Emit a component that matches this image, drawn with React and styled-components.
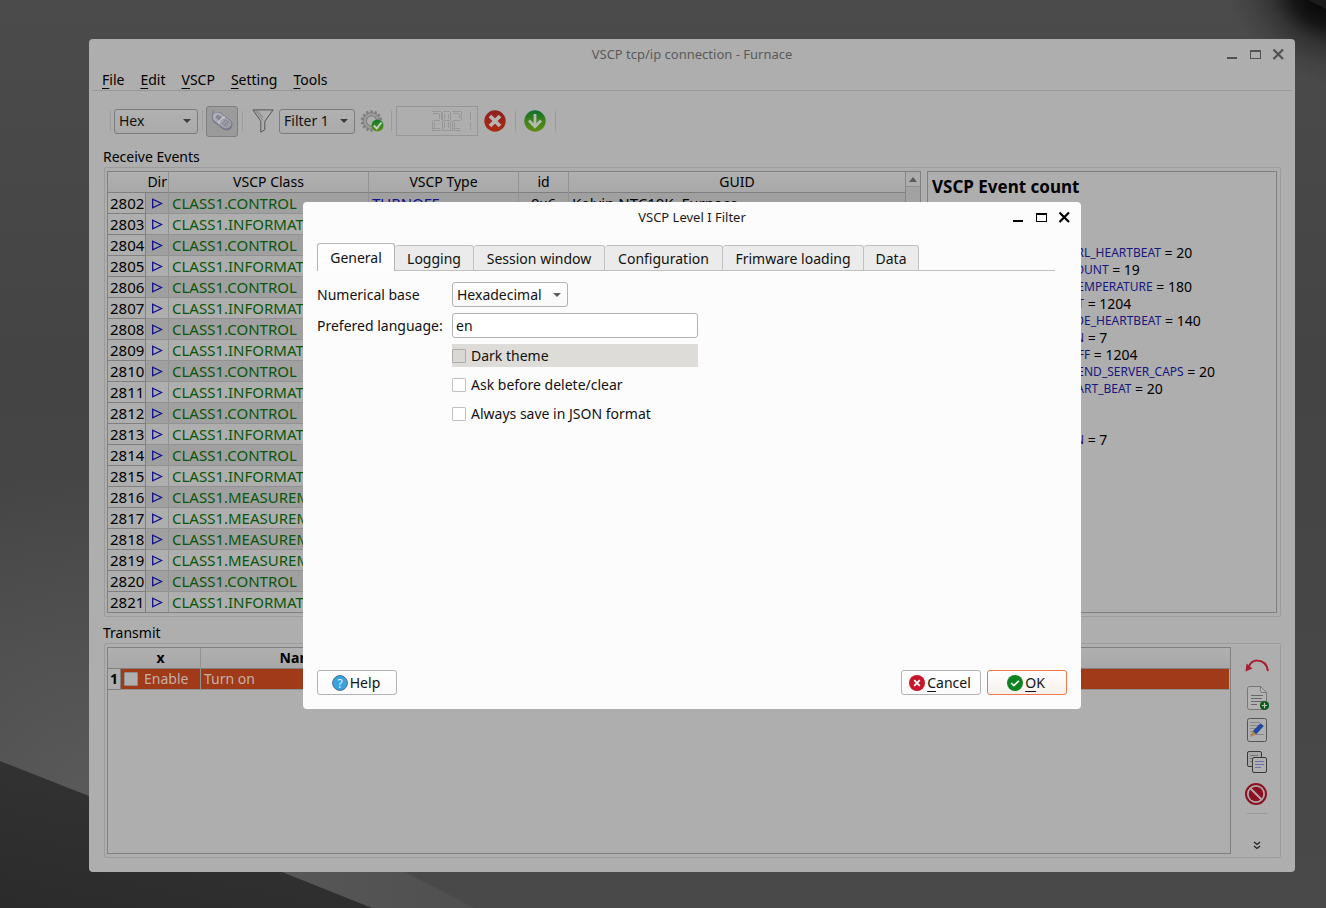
import React from 'react';
import styled, { createGlobalStyle, css } from 'styled-components';

const GlobalStyle = createGlobalStyle`
  * { box-sizing: border-box; }
  body { margin: 0; background: #484848; }
  body, button, input, select, table {
    font-family: "Noto Sans", "Open Sans", sans-serif;
    font-size: 14px;
    line-height: 20px;
  }
`;

/* ---------- Desktop ---------- */

const Desktop = styled.div`
  position: relative;
  display: flex;
  min-height: 100vh;
  padding: 39px 31px 36px 89px;
  overflow: hidden;
`;

const WallpaperSvg = styled.svg`
  position: absolute;
  inset: 0;
  width: 100%;
  height: 100%;
`;

function Wallpaper() {
  return (
    <WallpaperSvg viewBox="0 0 1326 908" preserveAspectRatio="xMidYMid slice" aria-hidden="true">
      <defs>
        <linearGradient id="sky" x1="0" y1="0" x2="0" y2="1">
          <stop offset="0" stopColor="#4b4b4b" />
          <stop offset="0.4" stopColor="#444444" />
          <stop offset="1" stopColor="#494949" />
        </linearGradient>
        <radialGradient id="glow" cx="90" cy="800" r="330" gradientUnits="userSpaceOnUse">
          <stop offset="0" stopColor="#5a5a5a" />
          <stop offset="1" stopColor="#5a5a5a" stopOpacity="0" />
        </radialGradient>
        <linearGradient id="hill" x1="0" y1="1" x2="0.6" y2="0">
          <stop offset="0" stopColor="#2b2b2b" />
          <stop offset="1" stopColor="#343434" />
        </linearGradient>
        <linearGradient id="strip" x1="0" y1="0" x2="1" y2="0">
          <stop offset="0" stopColor="#575757" />
          <stop offset="1" stopColor="#4f4f4f" />
        </linearGradient>
        <radialGradient id="corner" cx="1318" cy="4" r="80" gradientUnits="userSpaceOnUse" gradientTransform="translate(1318 4) rotate(35) scale(1.3 0.9) translate(-1318 -4)">
          <stop offset="0" stopColor="#080808" />
          <stop offset="0.25" stopColor="#080808" stopOpacity="0.8" />
          <stop offset="0.5" stopColor="#080808" stopOpacity="0.35" />
          <stop offset="0.75" stopColor="#080808" stopOpacity="0.12" />
          <stop offset="1" stopColor="#080808" stopOpacity="0" />
        </radialGradient>
      </defs>
      <rect width="1326" height="908" fill="url(#sky)" />
      <rect width="460" height="908" fill="url(#glow)" />
      <path d="M282 872 L405 872 L474 908 L372 908 Z" fill="url(#strip)" />
      <path d="M0 761 L89 796 L282 872 L372 908 L0 908 Z" fill="url(#hill)" />
      <rect x="1180" width="146" height="200" fill="url(#corner)" />
      <path d="M1308 0 L1326 9 L1326 0 Z" fill="#1c1c1c" />
    </WallpaperSvg>
  );
}

/* ---------- Windows ---------- */

const MainWindow = styled.main`
  position: relative;
  display: flex;
  flex-direction: column;
  flex: 1;
  min-width: 0;
  background: #aeaeae;
  border-radius: 4px;
  color: #000;
`;

const TitleBar = styled.header`
  display: grid;
  grid-template-columns: 1fr auto 1fr;
  align-items: center;
  height: 30px;
  padding: 0 9px;
  color: ${(p) => (p.$inactive ? '#5a5a5a' : '#1a1a1a')};
`;

const WindowTitle = styled.h1`
  grid-column: 2;
  margin: 0;
  font-size: 13px;
  font-weight: 400;
  line-height: 20px;
`;

const WindowControls = styled.div`
  display: flex;
  justify-content: flex-end;
  gap: 9px;
`;

const ControlButton = styled.button`
  display: flex;
  padding: 0;
  border: 0;
  background: none;
  color: ${(p) => (p.$inactive ? '#525252' : '#000')};
`;

function Controls({ inactive }) {
  return (
    <WindowControls>
      <ControlButton $inactive={inactive} aria-label="Minimize">
        <svg width="14" height="14"><rect x="1" y="10" width="10" height="2" fill="currentColor" /></svg>
      </ControlButton>
      <ControlButton $inactive={inactive} aria-label="Maximize">
        <svg width="14" height="14"><path d="M1 3h11v9H1z M2 5v6h9V5z" fill="currentColor" fillRule="evenodd" /></svg>
      </ControlButton>
      <ControlButton $inactive={inactive} aria-label="Close">
        <svg width="14" height="14"><path d="M1.500 2.500l9.500 9.500M11 2.500l-9.500 9.500" stroke="currentColor" strokeWidth="2.200" /></svg>
      </ControlButton>
    </WindowControls>
  );
}

const MenuBar = styled.nav`
  display: flex;
  gap: 16px;
  height: 22px;
  margin: 0 3px;
  padding: 1px 10px 0;
  border-bottom: 1px solid #989898;
`;

const MenuLink = styled.a`
  color: inherit;
  text-decoration: none;
`;

const Mnemonic = styled.span`
  text-decoration: underline;
  text-underline-offset: 3px;
`;

/* ---------- Shared controls ---------- */

const SelectBox = styled.span`
  display: inline-grid;
  align-items: center;
  width: ${(p) => p.$width}px;
`;

const SelectField = styled.select`
  grid-area: 1 / 1;
  width: 100%;
  height: 25px;
  padding: 0 4px;
  appearance: none;
  border: 1px solid ${(p) => (p.$dim ? '#7c7c7c' : '#b2b2b2')};
  border-radius: 3px;
  background: ${(p) => (p.$dim ? 'linear-gradient(#b1b1b1, #aaaaaa)' : 'linear-gradient(#fff, #f8f8f8)')};
  color: #111;
`;

const SelectArrow = styled.svg`
  grid-area: 1 / 1;
  justify-self: end;
  margin-right: 7px;
  pointer-events: none;
`;

function Select({ width, dim, options, ...rest }) {
  return (
    <SelectBox $width={width}>
      <SelectField $dim={dim} {...rest}>
        {options.map((o) => <option key={o}>{o}</option>)}
      </SelectField>
      <SelectArrow width="8" height="4"><path d="M0 0h8L4 4z" fill={dim ? '#3c3c3c' : '#5c5c5c'} /></SelectArrow>
    </SelectBox>
  );
}

/* ---------- Toolbar ---------- */

const ToolBar = styled.div`
  display: flex;
  align-items: center;
  height: 56px;
  padding: 4px 21px 0;
`;

const Group = styled.div`
  display: flex;
  align-items: center;
  gap: ${(p) => p.$gap}px;
  height: 20px;
  padding: 0 ${(p) => p.$end}px 0 ${(p) => p.$start}px;
  border-left: 1px solid #9c9c9c;
`;

const IconButton = styled.button`
  display: flex;
  align-items: center;
  justify-content: center;
  padding: 0;
  border: 0;
  background: none;
`;

const PressedButton = styled(IconButton)`
  width: 32px;
  height: 31px;
  border: 1px solid #7e7e7e;
  border-radius: 3px;
  background: #9b9b9b;
`;

function PhoneIcon() {
  return (
    <svg width="24" height="24" viewBox="0 0 24 24">
      <defs>
        <linearGradient id="phone" x1="0" y1="0" x2="1" y2="1">
          <stop offset="0" stopColor="#b4b4bb" />
          <stop offset="1" stopColor="#9a9aa8" />
        </linearGradient>
      </defs>
      <path d="M3 1v5" stroke="#85858f" strokeWidth="1.400" />
      <path d="M2 8.500 Q1 6 3.500 4.500 Q6 2.500 9.500 3 L21 11.500 Q23 13.500 22.500 17 Q20.500 21.500 16.500 21.500 Q14.500 21.500 12.500 20 L3.500 13 Q1.800 11.500 2 8.500z" fill="#77778b" />
      <path d="M2.800 7.500 Q2.500 5.500 4.500 4.500 Q6.500 3.200 9.500 3.800 L20.500 12 Q22 14 21 16.500 Q19 19.500 15.500 19.500 Q14 19.300 12.500 18.200 L4 11.600 Q2.800 10 2.800 7.500z" fill="url(#phone)" />
      <path d="M8.500 14.600 Q9.500 9 15 8" stroke="#cfcfd4" strokeWidth="1.200" fill="none" />
      <path d="M7.500 5.500l4.300 2.800l-2.500 3.200l-4-3z" fill="#85858f" />
      <path d="M15 10.500l4.500 3.300M13.500 12.400l4.500 3.300M12 14.300l4.300 3M15.500 10.500l-3.500 4.500M18 12.500l-3.300 4.500" stroke="#7a7a86" strokeWidth="0.800" />
    </svg>
  );
}

function FunnelIcon() {
  return (
    <svg width="22" height="24" viewBox="0 0 22 24" fill="none" stroke="#555">
      <path d="M0.700 0.900h20.600M1 1l7.800 11.300v10.900l4-2.600v-8.300L21 1" strokeWidth="1" />
      <path d="M3 1l8 10.500M5 1l6 7.500" strokeWidth="0.700" stroke="#6c6c6c" />
    </svg>
  );
}

function GearCheckIcon() {
  const teeth = Array.from({ length: 14 }, (_, i) => (i * 360) / 14);
  return (
    <svg width="24" height="23" viewBox="0 0 24 23">
      <defs>
        <linearGradient id="tick" x1="0" y1="0" x2="0" y2="1">
          <stop offset="0" stopColor="#0d7a2a" />
          <stop offset="1" stopColor="#5c9213" />
        </linearGradient>
      </defs>
      <g fill="#808080">
        {teeth.map((a) => <path key={a} d="M10 3.500L10.400 0.200h2.200l0.400 3.300z" transform={`rotate(${a} 11.500 11)`} />)}
      </g>
      <circle cx="11.500" cy="11" r="6.500" fill="none" stroke="#808080" strokeWidth="4" />
      <circle cx="11.500" cy="11" r="6.700" fill="none" stroke="#9c9c9c" strokeWidth="2" />
      <circle cx="17.500" cy="15.500" r="6" fill="url(#tick)" />
      <path d="M13.800 15.500l3 3l4.600-6" stroke="#c6cfc6" strokeWidth="2" fill="none" />
    </svg>
  );
}

function RedCrossIcon() {
  return (
    <svg width="22" height="22" viewBox="0 0 22 22">
      <defs>
        <linearGradient id="cross" x1="0" y1="0" x2="0" y2="1">
          <stop offset="0" stopColor="#8e2020" />
          <stop offset="1" stopColor="#ad2a12" />
        </linearGradient>
      </defs>
      <circle cx="11" cy="11" r="10.700" fill="url(#cross)" />
      <path d="M6 6l10 10M16 6L6 16" stroke="#b9b4b3" strokeWidth="3.800" />
    </svg>
  );
}

function GreenArrowIcon() {
  return (
    <svg width="22" height="22" viewBox="0 0 22 22">
      <defs>
        <linearGradient id="down" x1="0" y1="0" x2="0" y2="1">
          <stop offset="0" stopColor="#0b6e2f" />
          <stop offset="0.500" stopColor="#3f8218" />
          <stop offset="1" stopColor="#5d8e12" />
        </linearGradient>
      </defs>
      <circle cx="11" cy="11" r="10.700" fill="url(#down)" />
      <path d="M11 4v13M5 10.500l6 6.200l6-6.200" stroke="#b4bab2" strokeWidth="2.800" fill="none" />
    </svg>
  );
}

const Lcd = styled.svg`
  display: block;
`;

function LcdCounter() {
  return (
    <Lcd width="82" height="31" role="img" aria-label="2821">
      <path d="M0.500 30V0.500H82" fill="none" stroke="#979797" />
      <path d="M0 29.500h82M81.500 0v30" stroke="#979797" />
      <g fill="none" stroke="#989898">
        <path d="M36 5.500h9M37 7.500h6M45.500 6v8M43.500 8v5M37 14.500h7M36.500 15v9M38.500 16v6M36 24.500h9M37 22.500h7" />
        <path d="M47 5.500h7M46.500 6v8M48.500 8v5M54.500 6v8M52.500 8v5M47 14.500h7M46.500 15v9M48.500 16v6M54.500 15v9M52.500 16v6M46 24.500h9" />
        <path d="M56 5.500h9M57 7.500h6M65.500 6v8M63.500 8v5M57 14.500h7M56.500 15v9M58.500 16v6M56 24.500h9M57 22.500h7" />
        <path d="M74.500 6v8M74.500 16v8" />
      </g>
    </Lcd>
  );
}

/* ---------- Panels ---------- */

const Section = styled.section`
  display: flex;
  flex-direction: column;
  flex: ${(p) => (p.$grow ? 1 : 'none')};
  margin: 0 14px ${(p) => (p.$grow ? 14 : 6)}px;
`;

const SectionTitle = styled.h2`
  margin: 0;
  font-size: 14px;
  font-weight: 400;
  line-height: 20px;
`;

const GroupBox = styled.div`
  display: flex;
  flex: 1;
  gap: 6px;
  margin-left: 1px;
  padding: 3px 3px 3px 2px;
  border: 1px solid #9c9c9c;
  border-radius: 2px;
`;

const Frame = styled.div`
  display: flex;
  flex: 1;
  align-items: flex-start;
  min-width: 0;
  border: 1px solid #808080;
  overflow: hidden;
`;

const cell = css`
  height: 21px;
  padding: 0 3px;
  border-bottom: 1px solid #929292;
  border-right: 1px solid #929292;
  line-height: 20px;
  white-space: nowrap;
  overflow: hidden;
`;

const DataTable = styled.table`
  flex: 1;
  width: 100%;
  table-layout: fixed;
  border-collapse: separate;
  border-spacing: 0;
`;

const Col = styled.col`
  width: ${(p) => p.$width}px;
`;

const HeadCell = styled.th`
  ${cell}
  padding: 0 1px;
  font-weight: ${(p) => (p.$bold ? 700 : 400)};
  text-align: ${(p) => p.$align || 'center'};
  border-bottom-color: #808080;
  background: linear-gradient(#b0b0b0, #a8a8a8);
  &:last-child { border-right: 0; }
`;

const CornerCell = styled(HeadCell)`
  border-right: 0;
`;

const RowHead = styled.th`
  ${cell}
  padding: 0 1px 0 2px;
  font-size: ${(p) => (p.$bold ? 14 : 15)}px;
  font-weight: ${(p) => (p.$bold ? 700 : 400)};
  text-align: left;
  border-color: #808080;
`;

const Cell = styled.td`
  ${cell}
  color: ${(p) => p.$color || '#000'};
  font-size: 15px;
  text-align: ${(p) => p.$align || 'left'};
  &:last-child { border-right: 0; }
`;

const DirectionMark = styled.svg`
  display: block;
  margin: 0 auto;
`;

const EventRow = styled.tr`
  &:nth-child(odd) td { background: #a0a0a0; }
  &:last-child > * { height: 20px; border-bottom: 0; }
`;

const ScrollBar = styled.div`
  align-self: stretch;
  width: 15px;
  border-left: 1px solid #868686;
  background: #a2a2a2;
`;

const ScrollUp = styled.button`
  display: flex;
  align-items: center;
  justify-content: center;
  width: 14px;
  height: 15px;
  padding: 0;
  border: 1px solid #909090;
  border-width: 0 0 1px;
  background: #acacac;
`;

const CountPanel = styled.aside`
  flex: none;
  width: 350px;
  padding: 4px;
  border: 1px solid #808080;
`;

const CountTitle = styled.h2`
  margin: 0 0 46px;
  font-size: 17px;
  font-weight: 700;
  line-height: 22px;
`;

const CountList = styled.ul`
  margin: 0;
  padding: 0;
  list-style: none;
`;

const CountLine = styled.li`
  display: flex;
  height: 17px;
  line-height: 17px;
  white-space: pre;
`;

const CountName = styled.span`
  color: #17177c;
  font-size: 12px;
`;

const NamePrefix = styled(CountName)`
  width: 152px;
  text-align: right;
`;

const SelectedCell = styled(Cell)`
  background: #a03a18;
  color: #c3b1a9;
  font-size: 14px;
  &:last-child { border-right: 1px solid #aeaeae; }
`;

const EnableLabel = styled.label`
  display: flex;
  align-items: center;
  gap: 6px;
`;

const CheckBox = styled.input`
  appearance: none;
  flex: none;
  width: 14px;
  height: 14px;
  margin: 0;
  border: 1px solid ${(p) => (p.$dim ? '#8e8e8e' : p.$hot ? '#adaca8' : '#c0c0c0')};
  border-radius: 1px;
  background: ${(p) => (p.$dim ? '#b0b0b0' : p.$hot ? '#d9d8d4' : '#fff')};
`;

const SideBar = styled.div`
  display: flex;
  flex: none;
  flex-direction: column;
  align-items: center;
  width: 40px;
  padding: 3px 0 0;
`;

const SideButton = styled(IconButton)`
  width: 32px;
  height: ${(p) => p.$height || 32}px;
`;

const SideRule = styled.hr`
  width: 20px;
  margin: 3px 0 24px;
  border: 0;
  border-top: 1px solid #989898;
`;

function UndoIcon() {
  return (
    <svg width="24" height="24" viewBox="0 0 24 24">
      <path d="M4 12 Q7 6 12.500 6.500 Q21.500 7 23 17" stroke="#a81e30" strokeWidth="2" fill="none" />
      <path d="M0.500 17.500L1.500 9.500L7.500 14.500z" fill="#a81e30" />
    </svg>
  );
}

function AddPageIcon() {
  return (
    <svg width="24" height="26" viewBox="0 0 24 26">
      <path d="M4.500 1.500h11l6 6v15q0 2-2 2h-15q-2 0-2-2v-19q0-2 2-2z" fill="#b3b3b3" stroke="#777" />
      <path d="M15.500 1.500v4q0 2 2 2h4z" fill="#b9b9b9" stroke="#777" />
      <path d="M6 10.500h12M6 13.500h11M6 16.500h12M6 19.500h6" stroke="#666" />
      <circle cx="19.500" cy="20.500" r="4.600" fill="#0c5a17" />
      <path d="M19.500 17.800v5.400M16.800 20.500h5.400" stroke="#c0cac1" strokeWidth="1.200" />
    </svg>
  );
}

function EditPageIcon() {
  return (
    <svg width="22" height="26" viewBox="0 0 22 26">
      <rect x="1.500" y="1.500" width="19" height="23" rx="2" fill="#b0b0b0" stroke="#555" />
      <path d="M4 5.500h10M4 8.500h10M4 11.500h6M4 14.500h5M4 17.500h14" stroke="#888" />
      <path d="M6.800 14L14.500 6.200L17.800 9L10 17.500z" fill="#22479f" />
      <path d="M6.800 14L10 17.500L4 20z" fill="#b08350" />
    </svg>
  );
}

function CopyIcon() {
  return (
    <svg width="22" height="24" viewBox="0 0 22 24">
      <rect x="1.500" y="1.500" width="14" height="15" rx="1.500" fill="#a8a8a8" stroke="#3a3a3a" />
      <path d="M4 5.500h8M4 8.500h4M4 11.500h4" stroke="#777" />
      <rect x="6.500" y="7.500" width="14" height="15" rx="1.500" fill="#b0b0b0" stroke="#3a3a3a" />
      <path d="M9 11.500h9M9 14.500h9M9 17.500h6" stroke="#6f6fa6" />
    </svg>
  );
}

function ForbidIcon() {
  return (
    <svg width="24" height="24" viewBox="0 0 24 24">
      <circle cx="11" cy="12" r="10" fill="none" stroke="#8d1022" strokeWidth="2" />
      <circle cx="11" cy="12" r="7.300" fill="#8d1022" />
      <path d="M5.500 6.500l11 11" stroke="#b5aaab" strokeWidth="2" />
    </svg>
  );
}

/* ---------- Dialog ---------- */

const DialogLayer = styled.div`
  position: absolute;
  inset: 0;
  display: flex;
  align-items: center;
  justify-content: center;
`;

const Dialog = styled.section`
  display: flex;
  flex-direction: column;
  width: 778px;
  max-width: 100%;
  min-height: 507px;
  background: #fcfcfc;
  border-radius: 4px;
  color: #111;
`;

const TabList = styled.div`
  display: flex;
  align-items: flex-end;
  height: 28px;
  margin: 11px 26px 0 14px;
  background: linear-gradient(#c1c1c1, #c1c1c1) bottom / 100% 1px no-repeat;
`;

const Tab = styled.button`
  width: ${(p) => p.$width}px;
  height: 26px;
  padding: 1px 0 0;
  border: 1px solid #c1c1c1;
  border-left-width: 0;
  border-radius: 3px 3px 0 0;
  background: #ebebeb;
  color: #111;
  white-space: nowrap;
  ${(p) => p.$active && css`
    height: 28px;
    border-left-width: 1px;
    border-bottom: 0;
    border-color: #b4b4b4;
    background: #fdfdfd;
  `}
`;

const Form = styled.form`
  display: grid;
  grid-template-columns: 135px 246px;
  row-gap: 6px;
  align-items: center;
  flex: 1;
  align-content: start;
  padding: 11px 14px 0;
`;

const TextInput = styled.input`
  width: 100%;
  height: 25px;
  padding: 0 3px;
  border: 1px solid #b2b2b2;
  border-radius: 3px;
  background: #fff;
  color: #111;
`;

const CheckRow = styled.label`
  grid-column: 2;
  display: flex;
  align-items: center;
  gap: 5px;
  height: 23px;
  background: ${(p) => (p.$hot ? '#dddcd8' : 'transparent')};
`;

const DialogButtons = styled.footer`
  display: flex;
  gap: 6px;
  padding: 0 14px 14px;
`;

const PushButton = styled.button`
  display: flex;
  align-items: center;
  justify-content: center;
  gap: 2px;
  width: 80px;
  height: 25px;
  padding: 0 2px 0 0;
  border: 1px solid ${(p) => (p.$primary ? '#f07746' : '#b2b2b2')};
  border-radius: 3px;
  background: ${(p) => (p.$primary ? 'linear-gradient(#fff, #f7f0ed)' : 'linear-gradient(#fff, #fafafa)')};
  color: #111;
  &:first-child { margin-right: auto; }
`;

const QuestionMark = styled.text`
  font-size: 12px;
  text-anchor: middle;
  fill: #e8f6ff;
`;

function HelpIcon() {
  return (
    <svg width="16" height="16" viewBox="0 0 16 16">
      <circle cx="8" cy="8" r="7.400" fill="#36a3e4" stroke="#4d6f86" strokeWidth="1" />
      <QuestionMark x="8" y="12.500">?</QuestionMark>
    </svg>
  );
}

function CancelIcon() {
  return (
    <svg width="16" height="16" viewBox="0 0 16 16">
      <circle cx="8" cy="8" r="8" fill="#c7162b" />
      <path d="M5.200 5.200l5.600 5.600M10.800 5.200l-5.600 5.600" stroke="#fff" strokeWidth="1.800" />
    </svg>
  );
}

function OkIcon() {
  return (
    <svg width="16" height="16" viewBox="0 0 16 16">
      <circle cx="8" cy="8" r="8" fill="#0e8420" />
      <path d="M4.200 8l2.600 2.600l5-4.800" stroke="#fff" strokeWidth="1.700" fill="none" />
    </svg>
  );
}

/* ---------- Data ---------- */

const menus = ['File', 'Edit', 'VSCP', 'Setting', 'Tools'];

const tabs = [
  ['General', 78], ['Logging', 79], ['Session window', 131],
  ['Configuration', 118], ['Frimware loading', 141], ['Data', 55],
];

const CONTROL = 'CLASS1.CONTROL';
const INFO = 'CLASS1.INFORMATION';
const MEASURE = 'CLASS1.MEASUREMENT';

const events = [
  CONTROL, INFO, CONTROL, INFO, CONTROL, INFO, CONTROL, INFO, CONTROL, INFO,
  CONTROL, INFO, CONTROL, INFO, MEASURE, MEASURE, MEASURE, MEASURE, CONTROL, INFO,
].map((name, i) => ({ id: 2802 + i, name }));
Object.assign(events[0], { type: 'TURNOFF', node: '0x6', guid: 'Kelvin NTC10K, Furnace' });

const counts = [
  ['R', 'L_HEARTBEAT', 20], ['O', 'UNT', 19], ['E', 'MPERATURE', 180], ['T', '', 1204],
  ['D', 'E_HEARTBEAT', 140], ['N', '', 7], ['F', 'F', 1204], ['E', 'ND_SERVER_CAPS', 20],
  ['A', 'RT_BEAT', 20], null, null, ['N', '', 7],
];

function WithMnemonic({ text }) {
  return <span><Mnemonic>{text[0]}</Mnemonic>{text.slice(1)}</span>;
}

export default function App() {
  return (
    <>
      <GlobalStyle />
      <Desktop>
        <Wallpaper />
        <MainWindow>
          <TitleBar $inactive>
            <WindowTitle>VSCP tcp/ip connection - Furnace</WindowTitle>
            <Controls inactive />
          </TitleBar>
          <MenuBar>
            {menus.map((m) => <MenuLink key={m} href="#"><WithMnemonic text={m} /></MenuLink>)}
          </MenuBar>

          <ToolBar>
            <Group $start={3} $end={4}>
              <Select width={84} dim options={['Hex', 'Decimal']} aria-label="Number base" />
            </Group>
            <Group $start={3} $end={4}>
              <PressedButton aria-label="Connect"><PhoneIcon /></PressedButton>
            </Group>
            <Group $start={9} $end={7} $gap={5}>
              <IconButton aria-label="Filter"><FunnelIcon /></IconButton>
              <Select width={76} dim options={['Filter 1', 'Filter 2']} aria-label="Active filter" />
              <IconButton aria-label="Filter settings"><GearCheckIcon /></IconButton>
            </Group>
            <Group $start={4} $end={9} $gap={6}>
              <LcdCounter />
              <IconButton aria-label="Clear events"><RedCrossIcon /></IconButton>
            </Group>
            <Group $start={8} $end={9}>
              <IconButton aria-label="Load"><GreenArrowIcon /></IconButton>
            </Group>
            <Group $start={0} $end={0} />
          </ToolBar>

          <Section>
            <SectionTitle>Receive Events</SectionTitle>
            <GroupBox>
              <Frame>
                <DataTable>
                  <colgroup>
                    <Col $width={38} /><Col $width={23} /><Col $width={200} />
                    <Col $width={150} /><Col $width={50} /><col />
                  </colgroup>
                  <thead>
                    <tr>
                      <HeadCell colSpan={2} $align="right">Dir</HeadCell>
                      <HeadCell>VSCP Class</HeadCell>
                      <HeadCell>VSCP Type</HeadCell>
                      <HeadCell>id</HeadCell>
                      <HeadCell>GUID</HeadCell>
                    </tr>
                  </thead>
                  <tbody>
                    {events.map((e) => (
                      <EventRow key={e.id}>
                        <RowHead scope="row">{e.id}</RowHead>
                        <Cell>
                          <DirectionMark width="12" height="11"><path d="M1.700 1.200v8.600L10.500 5.500z" fill="none" stroke="#10108c" strokeWidth="1.300" /></DirectionMark>
                        </Cell>
                        <Cell $color="#0a560a">{e.name}</Cell>
                        <Cell $color="#10108c">{e.type}</Cell>
                        <Cell $align="center">{e.node}</Cell>
                        <Cell>{e.guid}</Cell>
                      </EventRow>
                    ))}
                  </tbody>
                </DataTable>
                <ScrollBar>
                  <ScrollUp aria-label="Scroll up">
                    <svg width="8" height="5"><path d="M0 5h8L4 0z" fill="#5a5a5a" /></svg>
                  </ScrollUp>
                </ScrollBar>
              </Frame>
              <CountPanel>
                <CountTitle>VSCP Event count</CountTitle>
                <CountList>
                  {counts.map((c, i) => (
                    <CountLine key={i}>
                      {c && (
                        <>
                          <NamePrefix>{c[0]}</NamePrefix>
                          <CountName>{c[1]}</CountName>
                          <span>{` = ${c[2]}`}</span>
                        </>
                      )}
                    </CountLine>
                  ))}
                </CountList>
              </CountPanel>
            </GroupBox>
          </Section>

          <Section $grow>
            <SectionTitle>Transmit</SectionTitle>
            <GroupBox>
              <Frame>
                <DataTable>
                  <colgroup>
                    <Col $width={13} /><Col $width={80} /><Col $width={200} /><col />
                  </colgroup>
                  <thead>
                    <tr>
                      <CornerCell />
                      <HeadCell $bold>x</HeadCell>
                      <HeadCell $bold>Name</HeadCell>
                      <HeadCell />
                    </tr>
                  </thead>
                  <tbody>
                    <tr>
                      <RowHead scope="row" $bold>1</RowHead>
                      <SelectedCell>
                        <EnableLabel><CheckBox type="checkbox" $dim />Enable</EnableLabel>
                      </SelectedCell>
                      <SelectedCell>Turn on</SelectedCell>
                      <SelectedCell />
                    </tr>
                  </tbody>
                </DataTable>
              </Frame>
              <SideBar>
                <SideButton aria-label="Send"><UndoIcon /></SideButton>
                <SideButton aria-label="Add"><AddPageIcon /></SideButton>
                <SideButton aria-label="Edit"><EditPageIcon /></SideButton>
                <SideButton aria-label="Clone"><CopyIcon /></SideButton>
                <SideButton aria-label="Delete"><ForbidIcon /></SideButton>
                <SideRule />
                <SideButton $height={14} aria-label="More">
                  <svg width="8" height="9" fill="none" stroke="#222" strokeWidth="1.300"><path d="M1 1l3 2.500L7 1M1 5l3 2.500L7 5" /></svg>
                </SideButton>
              </SideBar>
            </GroupBox>
          </Section>

          <DialogLayer>
            <Dialog role="dialog" aria-label="VSCP Level I Filter">
              <TitleBar>
                <WindowTitle>VSCP Level I Filter</WindowTitle>
                <Controls />
              </TitleBar>
              <TabList role="tablist">
                {tabs.map(([name, width], i) => (
                  <Tab key={name} role="tab" $width={width} $active={i === 0}>{name}</Tab>
                ))}
              </TabList>
              <Form>
                <label htmlFor="base">Numerical base</label>
                <Select id="base" width={116} options={['Hexadecimal', 'Decimal']} />
                <label htmlFor="language">Prefered language:</label>
                <TextInput id="language" defaultValue="en" />
                <CheckRow $hot><CheckBox type="checkbox" $hot />Dark theme</CheckRow>
                <CheckRow><CheckBox type="checkbox" />Ask before delete/clear</CheckRow>
                <CheckRow><CheckBox type="checkbox" />Always save in JSON format</CheckRow>
              </Form>
              <DialogButtons>
                <PushButton><HelpIcon />Help</PushButton>
                <PushButton><CancelIcon /><WithMnemonic text="Cancel" /></PushButton>
                <PushButton $primary><OkIcon /><WithMnemonic text="OK" /></PushButton>
              </DialogButtons>
            </Dialog>
          </DialogLayer>
        </MainWindow>
      </Desktop>
    </>
  );
}
